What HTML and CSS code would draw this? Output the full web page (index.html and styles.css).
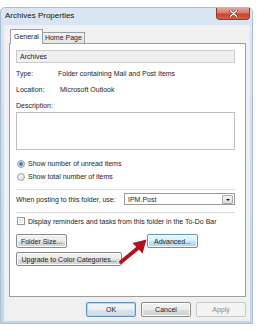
FILE: index.html
```html
<html lang="en">
<head>
    <meta charset="UTF-8">
    <meta name="viewport" content="width=device-width, initial-scale=1.0">
    <title>Archives Properties</title>
    <link rel="stylesheet" href="styles.css">
</head>
<body>
    <div class="window">
        <div class="titlebar">
            <span class="title">Archives Properties</span>
            <div class="close">
                <svg width="9" height="7" viewBox="0 0 9 7">
                    <path d="M1.5 0.8 L7.5 6.2 M7.5 0.8 L1.5 6.2" stroke="#6b2a20" stroke-width="2.6" stroke-linecap="round"/>
                    <path d="M1.5 0.8 L7.5 6.2 M7.5 0.8 L1.5 6.2" stroke="#ffffff" stroke-width="1.4" stroke-linecap="round"/>
                </svg>
            </div>
        </div>

        <div class="client">
            <div class="tabs">
                <div class="tab active">General</div>
                <div class="tab">Home Page</div>
            </div>

            <div class="panel">
                <div class="field disabled">Archives</div>

                <div class="info">
                    <span class="label">Type:</span>
                    <span>Folder containing Mail and Post Items</span>
                </div>
                <div class="info location">
                    <span class="label">Location:</span>
                    <span>Microsoft Outlook</span>
                </div>
                <div class="desc-label">Description:</div>
                <div class="field desc"></div>

                <div class="option first">
                    <span class="radio checked"></span>
                    <span>Show number of unread items</span>
                </div>
                <div class="option">
                    <span class="radio"></span>
                    <span>Show total number of items</span>
                </div>

                <div class="separator"></div>

                <div class="posting">
                    <span>When posting to this folder, use:</span>
                    <div class="combo">
                        <span>IPM.Post</span>
                        <span class="drop"></span>
                    </div>
                </div>

                <div class="separator second"></div>

                <div class="option check-row">
                    <span class="checkbox"></span>
                    <span>Display reminders and tasks from this folder in the To-Do Bar</span>
                </div>

                <div class="button-row">
                    <div class="btn folder-size">Folder Size...</div>
                    <div class="btn advanced hover">Advanced...</div>
                </div>
                <div class="button-row second">
                    <div class="btn upgrade">Upgrade to Color Categories...</div>
                </div>
            </div>

            <div class="dialog-buttons">
                <div class="btn default">OK</div>
                <div class="btn">Cancel</div>
                <div class="btn disabled">Apply</div>
            </div>
        </div>
    </div>

    <!-- red pointer drawn over the dialog -->
    <svg class="pointer" width="258" height="330" viewBox="0 0 258 330">
        <path d="M121 262 L138 248" stroke="#b3121b" stroke-width="3.8" stroke-linecap="round"/>
        <polygon points="146.5,239.5 132.5,243 142.5,253.5" fill="#b3121b"/>
    </svg>
</body>
</html>
```

FILE: styles.css
```css
body {
    margin: 0;
    width: 258px;
    height: 330px;
    position: relative;
    overflow: hidden;
    background: #fff;
    font-family: 'Liberation Sans', Arial, sans-serif;
    font-size: 7px;
    color: #1c1c1c;
}

.window {
    margin-top: 7px;
    width: 253px;
    height: 317px;
    box-sizing: border-box;
    border: 1px solid #a9bdd5;
    border-radius: 5px 5px 0 0;
    background: linear-gradient(#dae6f3, #d3e1f1 25%, #c2d6ec);
    display: flex;
    flex-direction: column;
    padding: 0 2px 2px 3px;
}

.titlebar {
    height: 17px;
    display: flex;
    align-items: flex-start;
}

.title {
    padding-left: 1px;
    font-size: 8px;
    line-height: 15px;
    color: #111;
}

.close {
    margin-left: auto;
    width: 34px;
    height: 12px;
    box-sizing: border-box;
    border: 1px solid #8b3a2e;
    border-top: none;
    border-radius: 0 0 4px 4px;
    background: linear-gradient(#e6a395, #d77a67 45%, #c4432d 55%, #d2634b);
    display: flex;
    align-items: center;
    justify-content: center;
}

.client {
    flex: 1;
    background: #f0f0f0;
    padding: 4px 0 0 5px;
    display: flex;
    flex-direction: column;
}

.tabs {
    display: flex;
    align-items: flex-end;
    height: 14px;
    margin-left: 1px;
    position: relative;
    z-index: 1;
}

.tab {
    height: 11px;
    box-sizing: border-box;
    border: 1px solid #9a9da4;
    border-bottom: none;
    padding: 0 2px;
    line-height: 10px;
    background: linear-gradient(#f3f3f3, #e4e4e4);
    margin-left: -1px;
}

.tab.active {
    height: 15px;
    margin-bottom: -1px;
    margin-left: 0;
    padding: 0 3px;
    line-height: 13px;
    background: #fff;
}

.panel {
    width: 237px;
    height: 254px;
    box-sizing: border-box;
    border: 1px solid #9a9da4;
    background: #fff;
    padding: 6px 10px 0 6px;
}

.field {
    height: 13px;
    box-sizing: border-box;
    border: 1px solid #bcbfc4;
    background: #fff;
    padding-left: 3px;
    line-height: 11px;
}

.field.disabled {
    background: #f0f0f0;
    border-color: #c9cbce;
}

.info {
    display: flex;
    height: 16px;
    line-height: 16px;
}

.field.disabled + .info {
    margin-top: 3px;
}

.label {
    width: 42px;
}

.location .label {
    width: 44px;
}

.desc-label {
    height: 14px;
    line-height: 15px;
}

.field.desc {
    height: 38px;
}

.option {
    display: flex;
    align-items: center;
    height: 13px;
    gap: 3px;
}

.option.first {
    margin-top: 7px;
}

.radio {
    width: 8px;
    height: 8px;
    box-sizing: border-box;
    border-radius: 50%;
    border: 1px solid #a3a3a3;
    background: radial-gradient(circle at 40% 40%, #f4f4f4, #d6d6d6);
    margin-left: 1px;
}

.radio.checked {
    background: radial-gradient(circle, #2a6fc9 0, #4a8ed8 35%, #bcd4ec 55%, #e8e8e8 75%);
}

.separator {
    height: 1px;
    background: #dcdcdc;
    margin-top: 6px;
}

.separator.second {
    margin-top: 7px;
}

.posting {
    display: flex;
    align-items: center;
    justify-content: space-between;
    height: 12px;
    margin-top: 3px;
}

.combo {
    width: 111px;
    height: 12px;
    box-sizing: border-box;
    border: 1px solid #969a9f;
    display: flex;
    align-items: center;
    padding-left: 3px;
}

.drop {
    margin-left: auto;
    margin-right: 1px;
    width: 11px;
    height: 9px;
    box-sizing: border-box;
    border: 1px solid #a9acb0;
    border-radius: 1px;
    background: linear-gradient(#f4f4f4, #dcdcdc);
    position: relative;
}

.drop::after {
    content: '';
    position: absolute;
    left: 3px;
    top: 3px;
    border-left: 2px solid transparent;
    border-right: 2px solid transparent;
    border-top: 2px solid #111;
}

.check-row {
    margin-top: 2px;
    height: 12px;
    gap: 3px;
}

.checkbox {
    width: 8px;
    height: 8px;
    box-sizing: border-box;
    border: 1px solid #959696;
    background: linear-gradient(135deg, #dadada, #f7f7f7);
    box-shadow: inset 0 0 0 1px #fff;
    margin-left: 1px;
}

.button-row {
    display: flex;
    margin-top: 7px;
}

.button-row.second {
    margin-top: 4px;
}

.btn {
    height: 14px;
    box-sizing: border-box;
    border: 1px solid #8a8a8a;
    border-radius: 2px;
    background: linear-gradient(#f2f2f2, #ebebeb 50%, #dddddd 50%, #cfcfcf);
    box-shadow: inset 0 0 0 1px #fbfbfb;
    display: flex;
    align-items: center;
    justify-content: center;
    color: #1c1c1c;
}

.folder-size {
    width: 51px;
}

.advanced {
    width: 51px;
    margin-left: 80px;
}

.btn.hover {
    border-color: #5a93c0;
    background: linear-gradient(#eaf6fd, #d9f0fc 50%, #bee6fd 50%, #a7d9f5);
}

.upgrade {
    width: 106px;
}

.dialog-buttons {
    width: 237px;
    display: flex;
    justify-content: flex-end;
    gap: 5px;
    margin-top: 5px;
}

.dialog-buttons .btn {
    width: 50px;
    height: 15px;
}

.btn.default {
    border-color: #5a93c0;
    box-shadow: inset 0 0 0 1px #a9dcf6;
    background: linear-gradient(#f1f7fb, #e8eff5 50%, #dbe4ec 50%, #d0dbe5);
}

.btn.disabled {
    border-color: #c6c9cc;
    background: #f4f4f4;
    box-shadow: none;
    color: #8a8a8a;
}

.pointer {
    position: absolute;
    left: 0;
    top: 0;
    pointer-events: none;
}
```
